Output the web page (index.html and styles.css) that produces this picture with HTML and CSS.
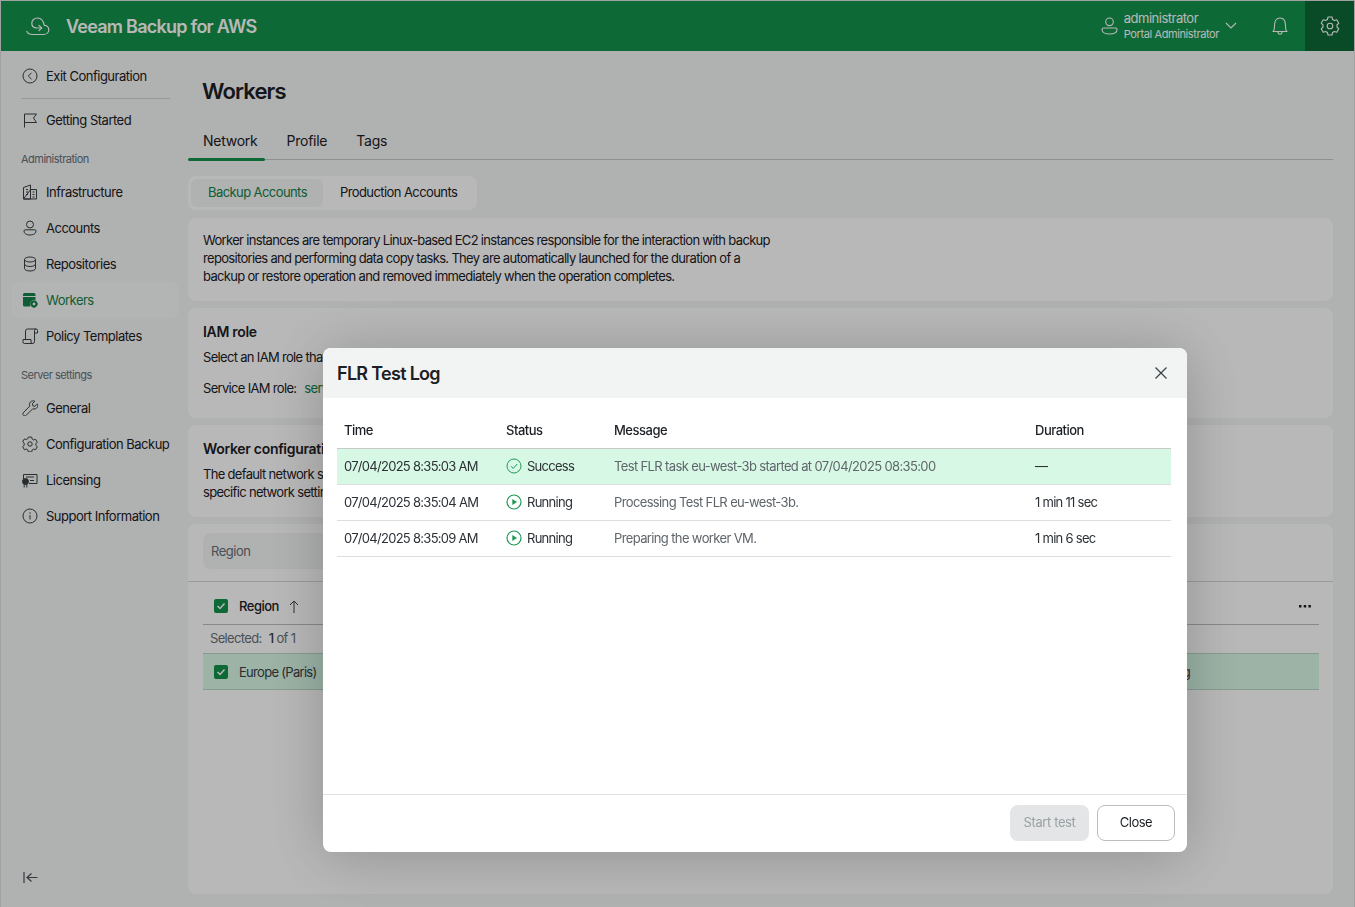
FILE: index.html
```html
<!DOCTYPE html>
<html lang="en">
<head>
  <meta charset="UTF-8">
  <title>Veeam Backup for AWS</title>
  <link rel="stylesheet" href="styles.css">
</head>
<body>

  <div class="app">

    <!-- Top bar -->
    <header class="topbar">
      <svg class="logo" width="24" height="20" viewBox="0 0 24 20" fill="none" stroke="currentColor" stroke-width="1.200" stroke-linecap="round" stroke-linejoin="round">
        <path d="M.8 15.500c1 2 3 3 6 3h10.500c3 0 5.500-2 5.500-4.800 0-2.500-2-4.400-4.500-4.400C17.500 5 15.200 2 11.500 2 8.200 2 5.800 4.300 5.800 7.300c0 3 2.200 4.700 5 4.700h4.700"/>
        <path d="M13 9.300l2.700 2.700-2.700 2.700"/>
      </svg>
      <span class="product">Veeam Backup for AWS</span>
      <div class="user">
        <svg width="17" height="18" viewBox="0 0 17 18" fill="none" stroke="currentColor" stroke-width="1.100">
          <circle cx="8.500" cy="4.800" r="3.800"/>
          <path d="M1 12.500c0-1 .8-1.500 1.500-1.500h12c.7 0 1.500.5 1.500 1.500 0 3-3.500 4.500-7.500 4.500S1 15.500 1 12.500z"/>
        </svg>
        <div class="user-text">
          <div class="user-name">administrator</div>
          <div class="user-role">Portal Administrator</div>
        </div>
        <svg class="chevron" width="12" height="7" viewBox="0 0 12 7" fill="none" stroke="currentColor" stroke-width="1.100"><path d="M1 1l5 5 5-5"/></svg>
      </div>
      <div class="bell">
        <svg width="16" height="18" viewBox="0 0 16 18" fill="none" stroke="currentColor" stroke-width="1.100" stroke-linejoin="round">
          <path d="M1 14.500c1.500-1 1.500-3 1.500-6C2.500 4 4.500 1 8 1s5.500 3 5.500 7.500c0 3 0 5 1.500 6z"/>
          <path d="M6 15c0 1.500 1 2.200 2 2.200s2-.7 2-2.200"/>
        </svg>
      </div>
      <div class="gear">
        <svg width="20" height="20" viewBox="0 0 20 20" fill="none" stroke="currentColor" stroke-width="1.100" stroke-linejoin="round">
          <path d="M8 1.500h4l.6 2.500 1.700 1 2.500-.7 2 3.400L17 9.500v2l1.800 1.800-2 3.400-2.500-.7-1.700 1-.6 2.500H8l-.6-2.500-1.700-1-2.500.7-2-3.400L3 11.500v-2L1.200 7.700l2-3.400 2.500.7 1.700-1z" transform="translate(0 -.5)"/>
          <circle cx="10" cy="10" r="2.800"/>
        </svg>
      </div>
    </header>

    <div class="main">

      <!-- Sidebar -->
      <aside class="sidebar">
        <nav>
          <a class="nav-item" href="#">
            <svg class="nav-icon" viewBox="0 0 16 16" fill="none" stroke="currentColor"><circle cx="8" cy="8" r="7"/><path d="M9.500 4.800L6.300 8l3.200 3.200"/></svg>
            Exit Configuration
          </a>
          <div class="nav-line"></div>
          <a class="nav-item" href="#">
            <svg class="nav-icon" viewBox="0 0 16 16" fill="none" stroke="currentColor"><path d="M2.500 15.500V2h12l-3 4 3 4.500H2.500"/></svg>
            Getting Started
          </a>
          <div class="nav-label">Administration</div>
          <a class="nav-item" href="#">
            <svg class="nav-icon" viewBox="0 0 16 16" fill="none" stroke="currentColor"><path d="M1.500 15V3.500L8.500 1v14zM8.500 5.500h6V15h-13z"/><path d="M4 5.500h2M4 8h2M4 10.500h2M10.500 8h2M10.500 10.500h2M10.500 13h2"/></svg>
            Infrastructure
          </a>
          <a class="nav-item" href="#">
            <svg class="nav-icon" viewBox="0 0 16 16" fill="none" stroke="currentColor"><circle cx="8" cy="4.500" r="3.500"/><path d="M2 11c0-.8.500-1.200 1.200-1.200h9.600c.7 0 1.200.4 1.200 1.200 0 2.800-3 4-6 4s-6-1.200-6-4z"/></svg>
            Accounts
          </a>
          <a class="nav-item" href="#">
            <svg class="nav-icon" viewBox="0 0 16 16" fill="none" stroke="currentColor"><ellipse cx="8" cy="3.500" rx="5.500" ry="2.500"/><path d="M2.500 3.500v9c0 1.400 2.500 2.500 5.500 2.500s5.500-1.100 5.500-2.500v-9M2.500 8c0 1.400 2.500 2.500 5.500 2.500s5.500-1.100 5.500-2.500"/></svg>
            Repositories
          </a>
          <a class="nav-item nav-item-active" href="#">
            <svg class="nav-icon" viewBox="0 0 16 16" fill="currentColor"><path d="M1 2.500A1.500 1.500 0 0 1 2.500 1h9.500A1.500 1.500 0 0 1 13.500 2.500V4H1zM1 5h12.500v3a4.500 4.500 0 0 0-5 6.500h-6A1.500 1.500 0 0 1 1 13z"/><circle cx="12" cy="12" r="2.400" fill="none" stroke="currentColor" stroke-width="2"/><path d="M11.300 8.300h1.400v1.500h-1.400zM11.300 14.200h1.400v1.500h-1.400zM8.300 11.300h1.500v1.400H8.300zM14.200 11.300h1.500v1.400h-1.500z"/></svg>
            Workers
          </a>
          <a class="nav-item" href="#">
            <svg class="nav-icon" viewBox="0 0 16 16" fill="none" stroke="currentColor"><path d="M3.500 11.500V3a2 2 0 0 1 2-2h8.500a1.500 1.500 0 0 1 1.500 1.500V5h-3V2.500A1.500 1.500 0 0 1 14 1M12.500 3v10.500a2 2 0 0 1-2 2H2.500A1.500 1.500 0 0 1 1 14v-2.500h8V14a1.500 1.500 0 0 0 1.500 1.500"/></svg>
            Policy Templates
          </a>
          <div class="nav-label">Server settings</div>
          <a class="nav-item" href="#">
            <svg class="nav-icon" viewBox="0 0 16 16" fill="none" stroke="currentColor" stroke-linejoin="round"><path d="M1.200 12.800l6.500-6.600C7 4 7.800 2 9.500 1.200 10.700.7 12 .8 12.800 1.200L10.300 3.800l.6 2 2 .6 2.500-2.500c.4 1 .4 2.400-.2 3.500-1 1.500-2.800 2-4.500 1.400l-6.500 6.500c-.8.800-2 .7-2.700 0s-.8-1.700-.3-2.500z"/></svg>
            General
          </a>
          <a class="nav-item" href="#">
            <svg class="nav-icon" viewBox="0 0 16 16" fill="none" stroke="currentColor" stroke-linejoin="round"><path d="M6.300 1h3.400l.5 2 1.400.8 2-.6 1.700 3-1.500 1.400v1.600l1.500 1.400-1.700 3-2-.6-1.400.8-.5 2H6.300l-.5-2-1.400-.8-2 .6-1.700-3 1.500-1.400V7.200L.7 5.800l1.700-3 2 .6 1.400-.8z" transform="translate(0 .100)"/><circle cx="8" cy="8" r="2.200"/></svg>
            Configuration Backup
          </a>
          <a class="nav-item" href="#">
            <svg class="nav-icon" viewBox="0 0 16 16" fill="none" stroke="currentColor"><path d="M1.500 7V2.500h13.500v9H7"/><path d="M4 5h8M8 8.500h4"/><circle cx="3.500" cy="9.500" r="3" fill="currentColor"/><path d="M2.200 12v3.500M4.800 12v3.500"/></svg>
            Licensing
          </a>
          <a class="nav-item" href="#">
            <svg class="nav-icon" viewBox="0 0 16 16" fill="none" stroke="currentColor"><circle cx="8" cy="8" r="7"/><path d="M8 7v4.500M8 4.300v1.400"/></svg>
            Support Information
          </a>
        </nav>
        <svg class="collapse" width="15" height="11" viewBox="0 0 15 11" fill="none" stroke="currentColor" stroke-width="1.200"><path d="M1 0v11M14.500 5.500H4M8.500 1.500l-4.500 4 4.500 4"/></svg>
      </aside>

      <!-- Content -->
      <div class="content">
        <h1 class="page-title">Workers</h1>
        <div class="tabs">
          <a class="tab tab-active" href="#">Network</a>
          <a class="tab" href="#">Profile</a>
          <a class="tab" href="#">Tags</a>
        </div>

        <div class="subtabs">
          <button class="subtab subtab-active">Backup Accounts</button>
          <button class="subtab">Production Accounts</button>
        </div>

        <section class="card card-intro">
          <p>Worker instances are temporary Linux-based EC2 instances responsible for the interaction with backup repositories and performing data copy tasks. They are automatically launched for the duration of a backup or restore operation and removed immediately when the operation completes.</p>
        </section>

        <section class="card card-iam">
          <h2>IAM role</h2>
          <p>Select an IAM role that</p>
          <p class="iam-line">Service IAM role: <span class="link">service</span></p>
        </section>

        <section class="card card-config">
          <h2>Worker configuration</h2>
          <p>The default network settings<br>specific network settings</p>
        </section>

        <section class="card card-region">
          <div class="region-filter">
            <div class="region-input">Region</div>
          </div>
          <div class="region-table">
            <div class="region-head">
              <span class="check"><svg width="10" height="8" viewBox="0 0 10 8" fill="none" stroke="#fff" stroke-width="1.500"><path d="M1.500 4l2.500 2.500 4.500-5"/></svg></span>
              <span class="region-title">Region</span>
              <svg width="10" height="13" viewBox="0 0 10 13" fill="none" stroke="currentColor" class="sort"><path d="M5 13V1M1 5l4-4 4 4"/></svg>
              <svg class="dots" width="12" height="3" viewBox="0 0 12 3" fill="currentColor"><path d="M0 0h2.500v2.500H0zM4.700 0h2.500v2.500H4.700zM9.400 0h2.500v2.500H9.400z"/></svg>
            </div>
            <div class="region-selected">Selected: <b>1</b> of 1</div>
            <div class="region-row">
              <span class="check"><svg width="10" height="8" viewBox="0 0 10 8" fill="none" stroke="#fff" stroke-width="1.500"><path d="M1.500 4l2.500 2.500 4.500-5"/></svg></span>
              Europe (Paris)
              <span class="region-state">Existing</span>
            </div>
          </div>
        </section>
      </div>
    </div>
  </div>

  <!-- Modal -->
  <div class="overlay">
    <div class="modal">
      <div class="modal-head">
        <h2>FLR Test Log</h2>
        <svg width="12" height="12" viewBox="0 0 12 12" fill="none" stroke="currentColor" stroke-width="1.200"><path d="M.5.500l11 11M11.500.500l-11 11"/></svg>
      </div>
      <div class="modal-body">
        <table>
          <colgroup>
            <col class="col-time">
            <col class="col-status">
            <col class="col-message">
            <col>
          </colgroup>
          <thead>
            <tr>
              <th>Time</th>
              <th>Status</th>
              <th>Message</th>
              <th>Duration</th>
            </tr>
          </thead>
          <tbody>
            <tr class="row-success">
              <td>07/04/2025 8:35:03 AM</td>
              <td>
                <div class="status">
                  <svg width="16" height="16" viewBox="0 0 16 16" fill="none" stroke="#1f9a56"><circle cx="8" cy="8" r="7"/><path d="M5 8.200l2.200 2.200 4-4.400"/></svg>
                  Success
                </div>
              </td>
              <td class="msg">Test FLR task eu-west-3b started at 07/04/2025 08:35:00</td>
              <td>&mdash;</td>
            </tr>
            <tr>
              <td>07/04/2025 8:35:04 AM</td>
              <td>
                <div class="status">
                  <svg width="16" height="16" viewBox="0 0 16 16" fill="none" stroke="#1f9a56" stroke-width="1.200"><circle cx="8" cy="8" r="7"/><path d="M6.300 5v6l4.700-3z" fill="#1f9a56" stroke="none"/></svg>
                  Running
                </div>
              </td>
              <td class="msg">Processing Test FLR eu-west-3b.</td>
              <td>1 min 11 sec</td>
            </tr>
            <tr>
              <td>07/04/2025 8:35:09 AM</td>
              <td>
                <div class="status">
                  <svg width="16" height="16" viewBox="0 0 16 16" fill="none" stroke="#1f9a56" stroke-width="1.200"><circle cx="8" cy="8" r="7"/><path d="M6.300 5v6l4.700-3z" fill="#1f9a56" stroke="none"/></svg>
                  Running
                </div>
              </td>
              <td class="msg">Preparing the worker VM.</td>
              <td>1 min 6 sec</td>
            </tr>
          </tbody>
        </table>
      </div>
      <div class="modal-foot">
        <button class="btn btn-disabled">Start test</button>
        <button class="btn btn-close">Close</button>
      </div>
    </div>
  </div>

</body>
</html>
```

FILE: styles.css
```css
* {
  box-sizing: border-box;
}

body {
  margin: 0;
  font-family: Inter, "Liberation Sans", sans-serif;
  font-size: 13px;
  letter-spacing: -0.5px;
  color: #1c2024;
  background-color: #f4f5f5;
  overflow: hidden;
}

.app {
  display: flex;
  flex-direction: column;
  height: 100vh;
  border: 1px solid #dfe0e1;
  border-bottom: none;
}

/* Top bar */
.topbar {
  display: flex;
  align-items: center;
  height: 50px;
  flex-shrink: 0;
  background-color: #12924b;
  color: #fff;
}

.logo {
  margin-left: 25px;
}

.product {
  margin-left: 16px;
  font-size: 18px;
  font-weight: 600;
  letter-spacing: -0.75px;
}

.user {
  display: flex;
  align-items: center;
  margin-left: auto;
}

.user-text {
  margin-left: 6px;
}

.user-name {
  font-size: 13px;
  line-height: 16px;
}

.user-role {
  font-size: 11px;
  line-height: 15px;
  margin-top: 1px;
  letter-spacing: -0.4px;
}

.chevron {
  margin-left: 6px;
  margin-bottom: 2px;
}

.bell {
  display: flex;
  margin-left: 35px;
  margin-right: 17px;
}

.gear {
  display: flex;
  align-items: center;
  justify-content: center;
  width: 49px;
  height: 50px;
  background-color: #0f6937;
}

/* Layout */
.main {
  display: flex;
  flex: 1;
  min-height: 0;
}

/* Sidebar */
.sidebar {
  display: flex;
  flex-direction: column;
  width: 187px;
  flex-shrink: 0;
  padding: 7px 9px 0 11px;
}

.sidebar nav {
  flex: 1;
}

.nav-item {
  display: flex;
  align-items: center;
  height: 36px;
  padding-left: 10px;
  border-radius: 8px;
  color: #1c2024;
  text-decoration: none;
  white-space: nowrap;
}

.nav-icon {
  width: 16px;
  height: 16px;
  margin-right: 8px;
  flex-shrink: 0;
  color: #3a4045;
}

.nav-item-active {
  background-color: #f9fafa;
  color: #12814a;
}

.nav-item-active .nav-icon {
  color: #12814a;
}

.nav-line {
  height: 1px;
  margin: 4px 9px 3px 9px;
  background-color: #cfd1d3;
}

.nav-label {
  display: flex;
  align-items: center;
  height: 36px;
  padding: 6px 0 0 9px;
  font-size: 11px;
  color: #667078;
}

.collapse {
  margin: 0 0 24px 11px;
  color: #4c5257;
}

/* Content */
.content {
  flex: 1;
  min-width: 0;
  padding-right: 21px;
}

.page-title {
  margin: 24px 0 0 14px;
  font-size: 22px;
  line-height: 32px;
  font-weight: 600;
  letter-spacing: -0.85px;
}

.tabs {
  display: flex;
  gap: 29px;
  height: 53px;
  margin-bottom: 16px;
  padding: 24px 0 0 15px;
  border-bottom: 1px solid #c5c7c9;
}

.tab {
  position: relative;
  height: 29px;
  font-size: 14px;
  line-height: 20px;
  letter-spacing: -0.25px;
  color: #1c2024;
  text-decoration: none;
}

.tab-active::after {
  content: "";
  position: absolute;
  left: -15px;
  right: -7px;
  bottom: -1px;
  height: 3px;
  background-color: #12924b;
  border-radius: 2px;
}

.subtabs {
  display: flex;
  width: fit-content;
  height: 34px;
  padding: 3px 4px 3px 3px;
  margin-bottom: 8px;
  background-color: #fff;
  border-radius: 8px;
}

.subtab {
  padding: 0 16px 2px 17px;
  border: none;
  border-radius: 6px;
  background: none;
  font-family: inherit;
  font-size: 13px;
  letter-spacing: -0.58px;
  color: #1c2024;
}

.subtab-active {
  background-color: #f4f5f5;
  color: #12814a;
}

.card {
  margin-bottom: 7px;
  padding: 15px 15px 0;
  background-color: #fff;
  border-radius: 8px;
}

.card p {
  margin: 0;
  line-height: 18px;
  letter-spacing: -0.68px;
}

.card h2 {
  margin: 0 0 7px;
  font-size: 14px;
  line-height: 18px;
  font-weight: 600;
  letter-spacing: -0.3px;
}

.card-intro {
  height: 83px;
  padding-top: 13px;
}

.card-intro p {
  width: 575px;
}

.card-iam {
  height: 110px;
}

.card .iam-line {
  margin-top: 13px;
}

.link {
  margin-left: 5px;
  color: #12814a;
}

.card-config {
  height: 92px;
}

/* Region table */
.card-region {
  height: 370px;
  margin-bottom: 0;
  padding: 0;
}

.region-filter {
  height: 58px;
  padding: 9px 15px 0;
  border-bottom: 1px solid #d5d6d8;
}

.region-input {
  width: 400px;
  height: 36px;
  padding-left: 8px;
  line-height: 36px;
  border-radius: 8px;
  background-color: #f4f5f5;
  color: #667078;
}

.region-table {
  margin: 0 14px 0 15px;
}

.region-head {
  display: flex;
  align-items: center;
  height: 43px;
  padding: 6px 0 0 11px;
  border-bottom: 1px solid #bbbdbf;
  font-weight: 500;
}

.check {
  display: flex;
  align-items: center;
  justify-content: center;
  width: 14px;
  height: 14px;
  margin-right: 11px;
  border-radius: 2px;
  background-color: #12924b;
}

.sort {
  margin-left: 10px;
  color: #3a4045;
}

.dots {
  margin-left: auto;
  margin-right: 8px;
}

.region-selected {
  height: 28px;
  padding-left: 7px;
  line-height: 27px;
  letter-spacing: -0.65px;
  color: #667078;
}

.region-selected b {
  margin-left: 4px;
  font-weight: 500;
  color: #3a4045;
}

.region-row {
  display: flex;
  align-items: center;
  height: 37px;
  padding-left: 11px;
  background-color: #d8f8e6;
  border-top: 1px solid #bcd8c8;
  border-bottom: 1px solid #bcd8c8;
  letter-spacing: -0.7px;
  color: #3a4045;
}

.region-state {
  margin-left: auto;
  margin-right: 129px;
}

/* Modal */
.overlay {
  position: fixed;
  top: 0;
  left: 0;
  width: 100%;
  height: 100%;
  background: rgba(0, 0, 0, 0.28);
}

.modal {
  position: absolute;
  left: 323px;
  top: 348px;
  display: flex;
  flex-direction: column;
  width: 864px;
  height: 504px;
  background-color: #fff;
  border-radius: 8px;
  overflow: hidden;
  box-shadow: 0 4px 60px rgba(0, 0, 0, 0.22);
}

.modal-head {
  display: flex;
  align-items: center;
  justify-content: space-between;
  height: 50px;
  flex-shrink: 0;
  padding: 0 20px 0 14px;
  background-color: #f2f4f3;
  color: #3a4045;
}

.modal-head h2 {
  margin: 0;
  font-size: 18px;
  font-weight: 600;
  letter-spacing: -0.7px;
  color: #1c2024;
}

.modal-body {
  flex: 1;
  padding: 14px 16px 0 14px;
}

table {
  width: 100%;
  border-collapse: collapse;
  table-layout: fixed;
}

.col-time {
  width: 162px;
}

.col-status {
  width: 108px;
}

.col-message {
  width: 421px;
}

th {
  height: 36px;
  padding: 0 7px;
  text-align: left;
  font-weight: 500;
  color: #1c2024;
  border-bottom: 1px solid #c6cac9;
}

td {
  height: 36px;
  padding: 0 7px;
  white-space: nowrap;
  letter-spacing: -0.72px;
  color: #2c3136;
  border-bottom: 1px solid #dcdfdf;
}

.row-success td {
  background-color: #d8f8e6;
}

td.msg {
  letter-spacing: -0.63px;
  color: #5f666b;
}

.status {
  display: flex;
  align-items: center;
  gap: 5px;
}

.modal-foot {
  display: flex;
  justify-content: flex-end;
  gap: 8px;
  height: 58px;
  flex-shrink: 0;
  padding: 10px 12px 0 0;
  border-top: 1px solid #e1e3e3;
}

.btn {
  width: 79px;
  height: 36px;
  padding: 0 0 2px;
  border-radius: 8px;
  font-family: inherit;
  font-size: 13px;
  letter-spacing: inherit;
}

.btn-disabled {
  border: none;
  background-color: #e3e5e6;
  color: #9aa1a5;
  letter-spacing: -0.4px;
}

.btn-close {
  width: 78px;
  border: 1px solid #b9bdbf;
  background-color: #fff;
  color: #1c2024;
}
```
